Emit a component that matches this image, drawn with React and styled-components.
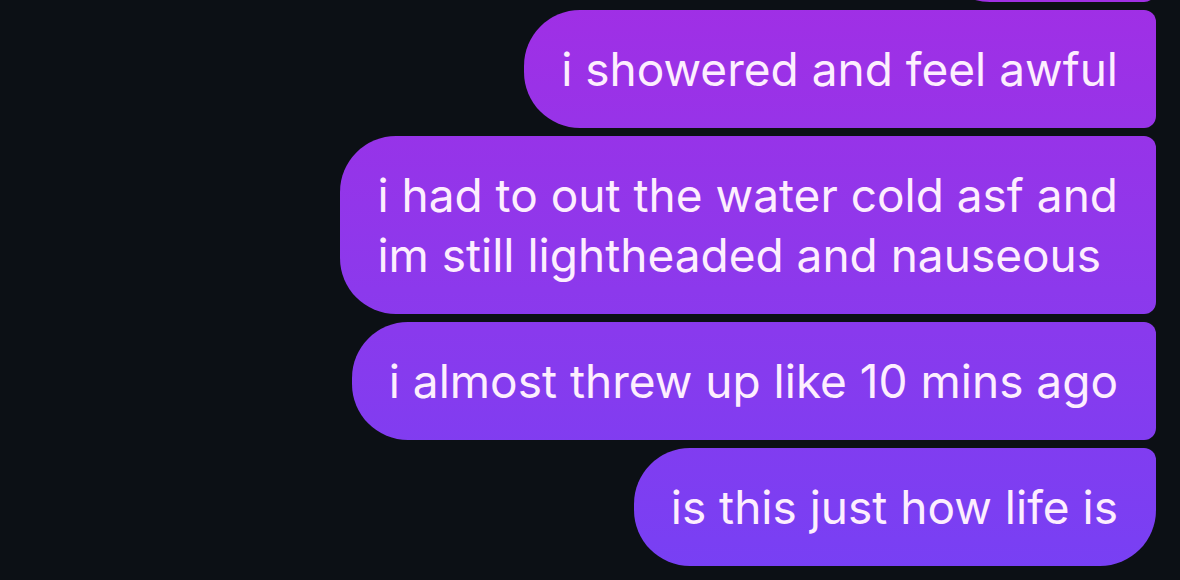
import styled, { createGlobalStyle } from "styled-components";

const GlobalStyle = createGlobalStyle`
  html, body {
    margin: 0;
    padding: 0;
    background: #0c1015;
  }
  body {
    font-family: Inter, "Noto Sans", sans-serif;
  }
`;

const messages = [
  { id: 1, text: "i showered and feel awful" },
  { id: 2, text: "i had to out the water cold asf and\nim still lightheaded and nauseous" },
  { id: 3, text: "i almost threw up like 10 mins ago" },
  { id: 4, text: "is this just how life is", last: true },
];

const App = () => {
  return (
    <Screen>
      <GlobalStyle />
      <Thread>
        {/* tail of the previous message, mostly scrolled off */}
        <PrevTail aria-hidden="true" />
        {messages.map((m) => (
          <Bubble key={m.id} $last={m.last}>
            {m.text}
          </Bubble>
        ))}
      </Thread>
    </Screen>
  );
};

const Screen = styled.div`
  width: 1180px;
  height: 580px;
  overflow: hidden;
  background: #0c1015;
`;

const Thread = styled.div`
  display: flex;
  flex-direction: column;
  align-items: flex-end;
  gap: 8px;
  padding-right: 24px;
  margin-top: -116px;
`;

const bubbleFill = `
  background: linear-gradient(180deg, #a02fe5 0px, #8c39ec 290px, #7740f4 580px);
  background-attachment: fixed;
`;

const Bubble = styled.div`
  box-sizing: border-box;
  padding: 29px 38px 29px 37px;
  font-size: 46px;
  line-height: 60px;
  color: #fdeefe;
  white-space: pre-line;
  ${bubbleFill}
  border-radius: 56px 12px ${(p) => (p.$last ? "56px" : "12px")} 56px;
`;

const PrevTail = styled.div`
  width: 222px;
  height: 118px;
  ${bubbleFill}
  border-radius: 56px 12px 12px 56px;
`;

export default App;
